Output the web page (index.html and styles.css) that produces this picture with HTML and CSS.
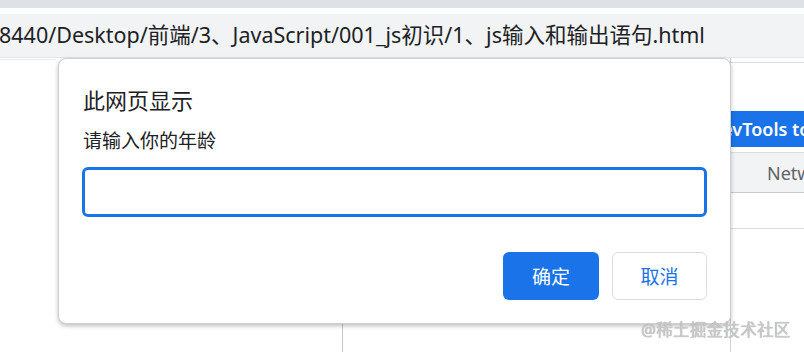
FILE: index.html
```html
<!DOCTYPE html>
<html lang="zh-CN">
<head>
<meta charset="utf-8">
<title>JS prompt</title>
<link rel="stylesheet" href="styles.css">
</head>
<body>
<div class="browser">
  <div class="tabstrip"></div>
  <div class="toolbar">
    <div class="omnibox"><span class="url">8440/Desktop/前端/3、JavaScript/001_js初识/1、js输入和输出语句.html</span></div>
  </div>
  <div class="viewport">
    <main class="page">
      <div class="page-top"></div>
      <div class="page-fill"></div>
      <div class="page-bottom"><div class="page-cell"></div></div>
    </main>
    <aside class="devtools">
      <div class="dt-head"></div>
      <div class="dt-banner"><span class="dt-banner-text">DevTools to</span></div>
      <div class="dt-tabs"><span class="dt-tab">Network</span></div>
      <div class="dt-row"></div>
    </aside>
  </div>

  <div class="dialog">
    <div class="dialog-title">此网页显示</div>
    <div class="dialog-label">请输入你的年龄</div>
    <div class="dialog-input"></div>
    <div class="dialog-actions">
      <button class="btn btn-primary">确定</button>
      <button class="btn btn-secondary">取消</button>
    </div>
  </div>

  <div class="watermark">@稀土掘金技术社区</div>
</div>
</body>
</html>
```

FILE: styles.css
```css
* { box-sizing: border-box; }

html, body {
  margin: 0;
  padding: 0;
  width: 804px;
  height: 352px;
  overflow: hidden;
  background: #ffffff;
  font-family: "Noto Sans", "Noto Sans CJK SC", sans-serif;
  color: #202124;
}

.browser {
  position: relative;
  width: 804px;
  height: 352px;
  display: flex;
  flex-direction: column;
}

.tabstrip {
  height: 8px;
  background: #dee1e6;
  flex: none;
}

.toolbar {
  height: 50px;
  padding-top: 6px;
  background: #ffffff;
  border-bottom: 1px solid #e3e5e8;
  flex: none;
}

.omnibox {
  height: 43px;
  background: #f1f3f4;
  display: flex;
  align-items: center;
  overflow: hidden;
  white-space: nowrap;
}

.url {
  font-size: 21.5px;
  line-height: 28px;
  color: #202124;
  margin-left: -1px;
  margin-top: -1px;
}

.viewport {
  flex: 1;
  display: flex;
  min-height: 0;
}

.page {
  flex: 1;
  display: flex;
  flex-direction: column;
}

.page-top {
  width: 56px;
  height: 2px;
  border-bottom: 1px solid #e8eaed;
}

.page-fill { flex: 1; }

.page-bottom {
  height: 29px;
  display: flex;
}

.page-cell {
  width: 343px;
  border-right: 1px solid #c4c7cc;
}

.devtools {
  width: 74px;
  flex: none;
  border-left: 1px solid #cfd2d6;
  display: flex;
  flex-direction: column;
}

.dt-head {
  height: 5px;
  border-bottom: 1px solid #dadce0;
  margin-bottom: 48px;
}

.dt-banner {
  height: 36px;
  background: #1a73e8;
  display: flex;
  align-items: center;
  overflow: hidden;
  white-space: nowrap;
}

.dt-banner-text {
  color: #ffffff;
  font-weight: 600;
  font-size: 18px;
  margin-left: -22px;
}

.dt-tabs {
  margin-top: 5px;
  height: 41px;
  background: #f1f3f4;
  border-top: 1px solid #dadce0;
  border-bottom: 1px solid #cbcdd1;
  display: flex;
  align-items: center;
  overflow: hidden;
  white-space: nowrap;
}

.dt-tab {
  color: #5f6368;
  font-size: 18px;
  margin-left: 36px;
}

.dt-row {
  height: 36px;
  border-bottom: 1px solid #dadce0;
}

.dialog {
  position: absolute;
  left: 58px;
  top: 58px;
  width: 673px;
  height: 266px;
  background: #ffffff;
  border: 1px solid #cfcfcf;
  border-radius: 8px;
  box-shadow: 0 2px 4px rgba(0, 0, 0, 0.25);
  padding: 25px 23px 0 23px;
  display: flex;
  flex-direction: column;
}

.dialog-title {
  font-size: 22px;
  line-height: 32px;
  color: #202124;
  margin-left: 1px;
}

.dialog-label {
  margin-top: 12px;
  font-size: 19px;
  line-height: 27px;
  color: #202124;
  margin-left: 1px;
}

.dialog-input {
  margin-top: 12px;
  height: 50px;
  width: 625px;
  border: 3px solid #1a73e8;
  border-radius: 6px;
}

.dialog-actions {
  margin-top: 35px;
  display: flex;
  justify-content: flex-end;
  gap: 13px;
  width: 625px;
}

.btn {
  width: 96px;
  height: 48px;
  border-radius: 6px;
  font-family: "Noto Sans", "Noto Sans CJK SC", sans-serif;
  font-size: 19px;
  padding: 0;
  cursor: pointer;
}

.btn-primary {
  background: #1a73e8;
  color: #ffffff;
  border: none;
}

.btn-secondary {
  width: 95px;
  background: #ffffff;
  color: #1a73e8;
  border: 1px solid #dadce0;
}

.watermark {
  position: absolute;
  left: 641px;
  top: 319px;
  font-size: 16.5px;
  line-height: 22px;
  color: #c9c9c9;
  text-shadow: 0 0 1px #9a9a9a;
  white-space: nowrap;
  letter-spacing: 0.3px;
}
```
